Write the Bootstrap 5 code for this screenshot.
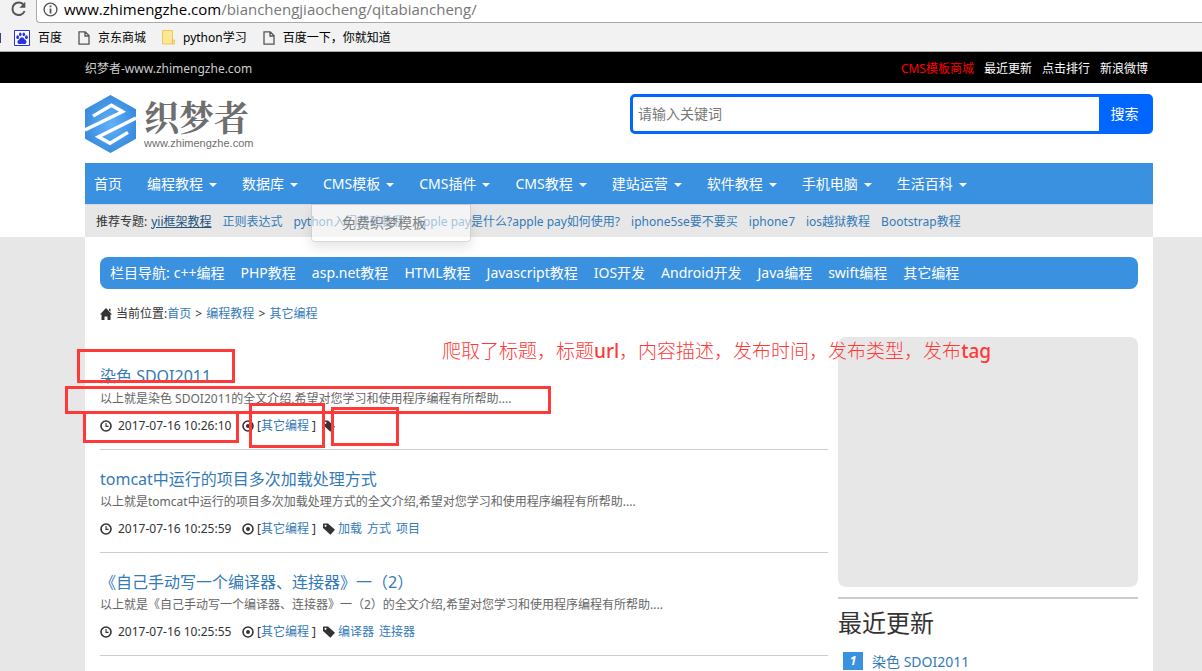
<!DOCTYPE html>
<html lang="zh-CN">
<head>
<meta charset="utf-8">
<meta name="viewport" content="width=device-width, initial-scale=1">
<title>其它编程 - 织梦者</title>
<link href="https://cdn.jsdelivr.net/npm/bootstrap@5.3.0/dist/css/bootstrap.min.css" rel="stylesheet">
<style>
  :root { --brand: #3a91df; --mark-red: #ff3838; --link: #337ab7; --panel: #e7e7e7; }
  body { font-family: "Noto Sans", "Noto Sans CJK SC", sans-serif; font-size: 12px; line-height: 20px; color: #333; background: var(--panel); overflow-x: hidden; }
  a { color: var(--link); text-decoration: none; }
  ul { list-style: none; margin: 0; padding: 0; }
  svg { display: block; flex: none; }
  .shell { padding-left: 85px; padding-right: 49px; }

  .browser { background: #f2f2f2; border-bottom: 1px solid #aaa; color: #000; }
  .address-row { height: 23px; padding-left: 10px; gap: 8px; }
  .address { background: #fff; border: 1px solid #aaa; border-width: 0 0 1px 1px; border-bottom-left-radius: 4px; height: 23px; padding: 0 0 4px 6px; gap: 6px; font-family: "Open Sans", sans-serif; font-size: 15px; }
  .address .path { color: #777; }
  .marks { height: 28px; padding-top: 1px; }
  .marks a { color: #000; gap: 8px; }
  .marks ul { gap: 16px; }
  .cut-mark { width: 14px; height: 10px; border-left: 1px solid #4a3a8a; }

  .topbar { background: #000; color: #ccc; height: 31px; padding-top: 2px; }
  .topbar a { color: #fff; }
  .topbar a.hot { color: #f00; }
  .topbar ul { gap: 10px; padding-right: 5px; }

  .site-head { background: #fff; }
  .logo-row { height: 80px; }
  .brand-name { font-family: "Liberation Serif", "Noto Serif CJK SC", "Noto Sans CJK SC", serif; font-weight: 700; font-size: 35px; line-height: 34px; color: #6e6e6e; }
  .brand-url { font-family: "Liberation Sans", sans-serif; font-size: 11px; line-height: 12px; color: #6e6e6e; }
  .search { width: 523px; margin-top: 11px; height: 40px; border: 3px solid #06f; border-radius: 5px; background: #06f; }
  .search input { border: 0; border-radius: 2px 0 0 2px; padding: 0 5px; font-size: 14px; color: #333; }
  .search input::placeholder { color: #777; }
  .search button { width: 51px; border: 0; background: #06f; color: #fff; font-size: 14px; padding: 0; }

  .main-nav { background: var(--brand); height: 41px; padding-left: 9px; }
  .main-nav ul { gap: 25px; font-size: 14px; }
  .main-nav a { color: #fff; white-space: nowrap; }
  .main-nav .dropdown-toggle::after { border-width: 4px 4px 0; margin-left: 6px; vertical-align: 2px; }
  .topics { background: var(--panel); height: 33px; padding: 1px 0 0 11px; border-top: 1px solid #d8d8d8; white-space: nowrap; }
  .topics ul { gap: 11px; }
  .topics .current { color: #23527c; }
  .submenu { position: absolute; left: 226px; top: 41px; width: 160px; height: 38px; background: rgba(255,255,255,.55); border: 1px solid rgba(0,0,0,.15); border-radius: 0 0 4px 4px; box-shadow: 0 6px 12px rgba(0,0,0,.1); font-size: 14px; padding: 8px 0 0 30px; z-index: 2; }
  .submenu a { color: #808080; }

  .page-body { background: #fff; padding: 20px 15px 0; min-height: 434px; }
  .columns-nav { background: var(--brand); color: #fff; border-radius: 8px; height: 32px; padding-left: 10px; font-size: 14px; white-space: nowrap; }
  .columns-nav a { color: #fff; }
  .columns-nav ul { gap: 16px; }
  .crumbs { height: 48px; gap: 4px; padding-top: 2px; }
  .crumb-sep { margin: 0 1px; }
  .content-cols { gap: 10px; }
  .side { width: 300px; }
  .ad { height: 250px; background: var(--panel); border-radius: 8px; }
  .side h2 { border-top: 2px solid #ccc; margin: 10px 0 13px; padding-top: 8px; font-size: 24px; line-height: 32px; font-weight: 400; }
  .recent { padding-left: 5px; gap: 9px; font-size: 14px; }
  .rank { width: 20px; height: 18px; line-height: 18px; background: var(--brand); color: #fff; font-size: 12px; font-weight: 700; font-style: italic; text-align: center; }

  .posts { padding-top: 10px; }
  .post { padding: 16px 0 13px; border-bottom: 1px solid #ccc; }
  .post h3 { margin: 0; font-size: 16px; line-height: 26px; font-weight: 400; }
  .post p { margin: 0 0 7px; color: #666; }
  .meta { gap: 3px; height: 20px; white-space: nowrap; }
  .stamp { gap: 6px; min-width: 135px; }
  .tags { gap: 5px; }

  .box { position: absolute; border: 3px solid var(--mark-red); z-index: 3; pointer-events: none; }
  .box-title { left: -23px; top: 2px; width: 158px; height: 34px; }
  .box-desc { left: -35px; top: 39px; width: 486px; height: 28px; }
  .box-date { left: -17px; top: 64px; width: 156px; height: 32px; }
  .box-type { left: 149px; top: 56px; width: 76px; height: 45px; }
  .box-tag { left: 231px; top: 60px; width: 68px; height: 39px; }
  .remark { position: absolute; left: 342px; top: -11px; z-index: 3; font-size: 19px; line-height: 30px; color: var(--mark-red); font-weight: 300; white-space: nowrap; }
  .remark b { font-weight: 500; }
</style>
</head>
<body>
<svg width="0" height="0" class="position-absolute" aria-hidden="true">
  <symbol id="clock" viewBox="0 0 12 12"><circle cx="6" cy="6" r="5" fill="none" stroke="currentColor" stroke-width="1.6"/><path d="M6 3v3.4h2.6" fill="none" stroke="currentColor" stroke-width="1.1"/></symbol>
  <symbol id="record" viewBox="0 0 12 12"><circle cx="6" cy="6" r="5" fill="none" stroke="currentColor" stroke-width="1.6"/><circle cx="6" cy="6" r="2" fill="currentColor"/></symbol>
  <symbol id="tag" viewBox="0 0 12 12"><path fill="currentColor" fill-rule="evenodd" d="M0 1.2Q0 .5.7.5H5l7 6.2-4.6 5L0 5zM2.5 1.8a1 1 0 1 0 .01 0z"/></symbol>
  <symbol id="file" viewBox="0 0 12 14"><path d="M1 .8h6.2L11 4.6v8.6H1zM7 1v4h4" fill="none" stroke="#555" stroke-width="1.3"/></symbol>
</svg>

<header class="browser">
  <div class="address-row d-flex">
    <svg width="18" height="18" viewBox="0 0 18 18"><path d="M13.8 5A6.3 6.3 0 1 0 14.6 11" fill="none" stroke="#555" stroke-width="2"/><path d="M15.3 1.8v6H9.4z" fill="#555"/></svg>
    <div class="address d-flex align-items-center flex-grow-1">
      <svg width="15" height="15" viewBox="0 0 15 15"><circle cx="7.5" cy="7.5" r="6.4" fill="none" stroke="#555" stroke-width="1.4"/><path d="M7.5 6.5v5M7.5 3.5v1.8" stroke="#555" stroke-width="1.8"/></svg>
      <span>www.zhimengzhe.com<span class="path">/bianchengjiaocheng/qitabiancheng/</span></span>
    </div>
  </div>
  <nav class="marks d-flex align-items-center" aria-label="书签">
    <span class="cut-mark"></span>
    <ul class="d-flex">
      <li><a href="#" class="d-flex align-items-center"><svg width="16" height="16" viewBox="0 0 16 16"><path d="M.5.5h15v15H.5z" fill="#fff" stroke="#2932e1"/><g fill="#2932e1"><ellipse cx="3.7" cy="7.2" rx="1.4" ry="1.9"/><ellipse cx="6.3" cy="4.3" rx="1.3" ry="1.9"/><ellipse cx="9.8" cy="4.3" rx="1.3" ry="1.9"/><ellipse cx="12.4" cy="7.2" rx="1.4" ry="1.9"/><path d="M8 7.2c1.7 0 2.2 1.8 3.5 2.8 1.8 1.4 1.2 4-.9 4-1 0-1.6-.3-2.600-.3s-1.600.3-2.600.3c-2.100 0-2.700-2.600-.9-4C5.800 9 6.300 7.200 8 7.200z"/></g></svg>百度</a></li>
      <li><a href="#" class="d-flex align-items-center"><svg width="12" height="14"><use href="#file"/></svg>京东商城</a></li>
      <li><a href="#" class="d-flex align-items-center"><svg width="13" height="15" viewBox="0 0 13 15"><path d="M.5.5h10v9.500h2v4H.5z" fill="#ffe694" stroke="#efc75e"/><path d="M10.500 10v4" stroke="#e5b94a"/></svg>python学习</a></li>
      <li><a href="#" class="d-flex align-items-center"><svg width="12" height="14"><use href="#file"/></svg>百度一下，你就知道</a></li>
    </ul>
  </nav>
</header>

<div class="topbar shell d-flex align-items-center justify-content-between">
  <span>织梦者-www.zhimengzhe.com</span>
  <ul class="d-flex">
    <li><a href="#" class="hot">CMS模板商城</a></li><li><a href="#">最近更新</a></li><li><a href="#">点击排行</a></li><li><a href="#">新浪微博</a></li>
  </ul>
</div>

<div class="site-head shell">
  <div class="logo-row d-flex justify-content-between align-items-start">
    <a href="#" class="d-flex pt-2 mt-1" aria-label="织梦者">
      <svg width="51" height="58" viewBox="0 0 51 59" preserveAspectRatio="none">
        <defs><radialGradient id="hex"><stop offset="0" stop-color="#62b2fa"/><stop offset="1" stop-color="#3a8dde"/></radialGradient></defs>
        <path d="M25.500 0 51 14.500v30L25.500 59 0 44.500v-30z" fill="url(#hex)"/>
        <path d="M8 21.500 26.500 10.500 37.500 17 0 35.500M51 23.500 13.500 42.500 25 49 43 38" fill="none" stroke="#fff" stroke-width="3.500"/>
      </svg>
      <span class="ms-2 d-block">
        <span class="brand-name d-block mt-2">织梦者</span>
        <span class="brand-url d-block">www.zhimengzhe.com</span>
      </span>
    </a>
    <form class="search d-flex">
      <input type="text" class="flex-grow-1" placeholder="请输入关键词" aria-label="请输入关键词">
      <button type="button">搜索</button>
    </form>
  </div>
  <div class="position-relative">
    <nav class="main-nav d-flex align-items-center" aria-label="主导航">
      <ul class="d-flex">
        <li><a href="#">首页</a></li>
        <li><a href="#" class="dropdown-toggle">编程教程</a></li>
        <li><a href="#" class="dropdown-toggle">数据库</a></li>
        <li><a href="#" class="dropdown-toggle">CMS模板</a></li>
        <li><a href="#" class="dropdown-toggle">CMS插件</a></li>
        <li><a href="#" class="dropdown-toggle">CMS教程</a></li>
        <li><a href="#" class="dropdown-toggle">建站运营</a></li>
        <li><a href="#" class="dropdown-toggle">软件教程</a></li>
        <li><a href="#" class="dropdown-toggle">手机电脑</a></li>
        <li><a href="#" class="dropdown-toggle">生活百科</a></li>
      </ul>
    </nav>
    <div class="submenu"><a href="#">免费织梦模板</a></div>
    <div class="topics d-flex align-items-center">
      <span class="me-1">推荐专题:</span>
      <ul class="d-flex">
        <li><a href="#" class="current text-decoration-underline">yii框架教程</a></li>
        <li><a href="#">正则表达式</a></li>
        <li><a href="#">python入门基础教程</a></li>
        <li><a href="#">apple pay是什么?apple pay如何使用?</a></li>
        <li><a href="#">iphone5se要不要买</a></li>
        <li><a href="#">iphone7</a></li>
        <li><a href="#">ios越狱教程</a></li>
        <li><a href="#">Bootstrap教程</a></li>
      </ul>
    </div>
  </div>
</div>

<main class="shell">
  <div class="page-body">
    <nav class="columns-nav d-flex align-items-center" aria-label="栏目导航">
      <span class="me-1">栏目导航:</span>
      <ul class="d-flex">
        <li><a href="#">c++编程</a></li><li><a href="#">PHP教程</a></li><li><a href="#">asp.net教程</a></li><li><a href="#">HTML教程</a></li><li><a href="#">Javascript教程</a></li><li><a href="#">IOS开发</a></li><li><a href="#">Android开发</a></li><li><a href="#">Java编程</a></li><li><a href="#">swift编程</a></li><li><a href="#">其它编程</a></li>
      </ul>
    </nav>
    <div class="crumbs d-flex align-items-center">
      <svg width="12" height="12" viewBox="0 0 12 12"><path d="M6 0 12 6.500h-1.500V12H7.500V8.500h-3V12h-3V6.500H0zM9 .8h1.500v3L9 2.500z" fill="#333"/></svg>
      <span>当前位置:<a href="#">首页</a> <span class="crumb-sep">&gt;</span> <a href="#">编程教程</a> <span class="crumb-sep">&gt;</span> <a href="#">其它编程</a></span>
    </div>
    <div class="content-cols d-flex align-items-start">
      <div class="posts flex-grow-1">
        <article class="post position-relative">
          <h3><a href="#">染色 SDOI2011</a></h3>
          <p>以上就是染色 SDOI2011的全文介绍,希望对您学习和使用程序编程有所帮助....</p>
          <div class="meta d-flex align-items-center">
            <span class="stamp d-flex align-items-center"><svg width="12" height="12"><use href="#clock"/></svg>2017-07-16 10:26:10</span>
            <svg width="12" height="12" class="ms-1"><use href="#record"/></svg>
            <span>[<a href="#">其它编程</a> ]</span>
            <svg width="12" height="12" class="ms-1"><use href="#tag"/></svg>
          </div>
          <div class="box box-title"></div><div class="box box-desc"></div><div class="box box-date"></div><div class="box box-type"></div><div class="box box-tag"></div>
          <div class="remark">爬取了标题，标题<b>url</b>，内容描述，发布时间，发布类型，发布<b>tag</b></div>
        </article>
        <article class="post">
          <h3><a href="#">tomcat中运行的项目多次加载处理方式</a></h3>
          <p>以上就是tomcat中运行的项目多次加载处理方式的全文介绍,希望对您学习和使用程序编程有所帮助....</p>
          <div class="meta d-flex align-items-center">
            <span class="stamp d-flex align-items-center"><svg width="12" height="12"><use href="#clock"/></svg>2017-07-16 10:25:59</span>
            <svg width="12" height="12" class="ms-1"><use href="#record"/></svg>
            <span>[<a href="#">其它编程</a> ]</span>
            <svg width="12" height="12" class="ms-1"><use href="#tag"/></svg>
            <span class="tags d-flex"><a href="#">加载</a><a href="#">方式</a><a href="#">项目</a></span>
          </div>
        </article>
        <article class="post">
          <h3><a href="#">《自己手动写一个编译器、连接器》一（2）</a></h3>
          <p>以上就是《自己手动写一个编译器、连接器》一（2）的全文介绍,希望对您学习和使用程序编程有所帮助....</p>
          <div class="meta d-flex align-items-center">
            <span class="stamp d-flex align-items-center"><svg width="12" height="12"><use href="#clock"/></svg>2017-07-16 10:25:55</span>
            <svg width="12" height="12" class="ms-1"><use href="#record"/></svg>
            <span>[<a href="#">其它编程</a> ]</span>
            <svg width="12" height="12" class="ms-1"><use href="#tag"/></svg>
            <span class="tags d-flex"><a href="#">编译器</a><a href="#">连接器</a></span>
          </div>
        </article>
      </div>
      <aside class="side flex-shrink-0">
        <div class="ad"></div>
        <h2>最近更新</h2>
        <div class="recent d-flex align-items-start"><span class="rank">1</span><a href="#">染色 SDOI2011</a></div>
      </aside>
    </div>
  </div>
</main>
<script src="https://cdn.jsdelivr.net/npm/bootstrap@5.3.0/dist/js/bootstrap.bundle.min.js"></script>
</body>
</html>
